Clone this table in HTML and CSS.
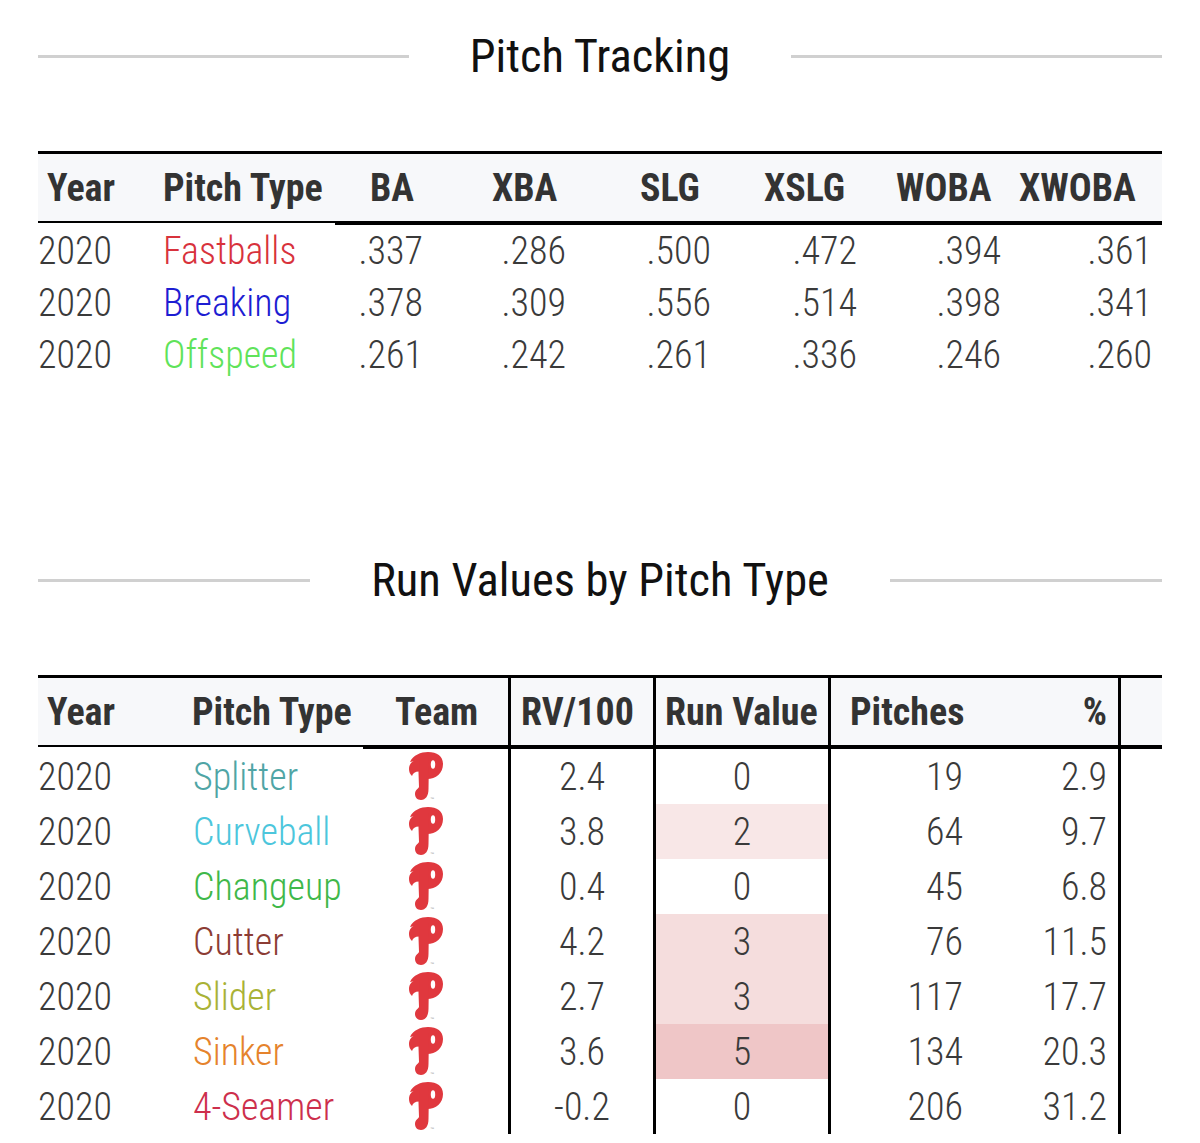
FILE: index.html
```html
<!DOCTYPE html>
<html lang="en">
<head>
<meta charset="utf-8">
<title>Pitch Tracking</title>
<link rel="stylesheet" href="styles.css">
</head>
<body>
<svg width="0" height="0" class="defs" aria-hidden="true">
  <defs>
    <g id="phi">
      <g fill="#e0383e">
        <path d="M2 10 C5 3 13 0 20 0 C29 0 35 4 35 12 C35 21 28 27 19 27 L12 27 L12 8 Z"/>
        <path d="M10 6 L21 6 L20.5 37 C20.5 44 17.5 48 13 48 C9 48 7 45 7 42 C7 38 10 37 11 35 Z"/>
        <path d="M12 7 C4 8 1 12 1 17 C1 20 2 22 4 24 C5 21 7 19.5 11 19.5 Z"/>
      </g>
      <ellipse cx="25" cy="12.5" rx="2.2" ry="4.2" fill="#fff"/>
      <text x="22" y="48" font-size="4" fill="#999" font-family="Liberation Sans, sans-serif">™</text>
    </g>
  </defs>
</svg>
<div class="page">
  <div class="section-title">
    <span class="rule"></span>
    <h2>Pitch Tracking</h2>
    <span class="rule"></span>
  </div>

  <div class="tbl t1">
    <div class="row hdr">
      <div class="cell lead">Year</div>
      <div class="cell lead">Pitch Type</div>
      <div class="cell">BA</div>
      <div class="cell">XBA</div>
      <div class="cell">SLG</div>
      <div class="cell">XSLG</div>
      <div class="cell">WOBA</div>
      <div class="cell">XWOBA</div>
    </div>
    <div class="row data">
      <div class="cell">2020</div>
      <div class="cell pt fastballs">Fastballs</div>
      <div class="cell">.337</div>
      <div class="cell">.286</div>
      <div class="cell">.500</div>
      <div class="cell">.472</div>
      <div class="cell">.394</div>
      <div class="cell">.361</div>
    </div>
    <div class="row data">
      <div class="cell">2020</div>
      <div class="cell pt breaking">Breaking</div>
      <div class="cell">.378</div>
      <div class="cell">.309</div>
      <div class="cell">.556</div>
      <div class="cell">.514</div>
      <div class="cell">.398</div>
      <div class="cell">.341</div>
    </div>
    <div class="row data">
      <div class="cell">2020</div>
      <div class="cell pt offspeed">Offspeed</div>
      <div class="cell">.261</div>
      <div class="cell">.242</div>
      <div class="cell">.261</div>
      <div class="cell">.336</div>
      <div class="cell">.246</div>
      <div class="cell">.260</div>
    </div>
  </div>

  <div class="section-title s2">
    <span class="rule"></span>
    <h2>Run Values by Pitch Type</h2>
    <span class="rule"></span>
  </div>

  <div class="tbl t2">
    <div class="row hdr">
      <div class="cell lead">Year</div>
      <div class="cell lead">Pitch Type</div>
      <div class="cell">Team</div>
      <div class="cell vl">RV/100</div>
      <div class="cell vl">Run Value</div>
      <div class="cell vl">Pitches</div>
      <div class="cell">%</div>
      <div class="cell vl"></div>
    </div>
    <div class="row data">
      <div class="cell">2020</div>
      <div class="cell pt splitter">Splitter</div>
      <div class="cell team"><svg class="logo" viewBox="0 0 36 49"><use href="#phi"/></svg></div>
      <div class="cell vl">2.4</div>
      <div class="cell vl">0</div>
      <div class="cell vl">19</div>
      <div class="cell">2.9</div>
      <div class="cell vl"></div>
    </div>
    <div class="row data">
      <div class="cell">2020</div>
      <div class="cell pt curveball">Curveball</div>
      <div class="cell team"><svg class="logo" viewBox="0 0 36 49"><use href="#phi"/></svg></div>
      <div class="cell vl">3.8</div>
      <div class="cell vl heat2">2</div>
      <div class="cell vl">64</div>
      <div class="cell">9.7</div>
      <div class="cell vl"></div>
    </div>
    <div class="row data">
      <div class="cell">2020</div>
      <div class="cell pt changeup">Changeup</div>
      <div class="cell team"><svg class="logo" viewBox="0 0 36 49"><use href="#phi"/></svg></div>
      <div class="cell vl">0.4</div>
      <div class="cell vl">0</div>
      <div class="cell vl">45</div>
      <div class="cell">6.8</div>
      <div class="cell vl"></div>
    </div>
    <div class="row data">
      <div class="cell">2020</div>
      <div class="cell pt cutter">Cutter</div>
      <div class="cell team"><svg class="logo" viewBox="0 0 36 49"><use href="#phi"/></svg></div>
      <div class="cell vl">4.2</div>
      <div class="cell vl heat3">3</div>
      <div class="cell vl">76</div>
      <div class="cell">11.5</div>
      <div class="cell vl"></div>
    </div>
    <div class="row data">
      <div class="cell">2020</div>
      <div class="cell pt slider">Slider</div>
      <div class="cell team"><svg class="logo" viewBox="0 0 36 49"><use href="#phi"/></svg></div>
      <div class="cell vl">2.7</div>
      <div class="cell vl heat3">3</div>
      <div class="cell vl">117</div>
      <div class="cell">17.7</div>
      <div class="cell vl"></div>
    </div>
    <div class="row data">
      <div class="cell">2020</div>
      <div class="cell pt sinker">Sinker</div>
      <div class="cell team"><svg class="logo" viewBox="0 0 36 49"><use href="#phi"/></svg></div>
      <div class="cell vl">3.6</div>
      <div class="cell vl heat5">5</div>
      <div class="cell vl">134</div>
      <div class="cell">20.3</div>
      <div class="cell vl"></div>
    </div>
    <div class="row data">
      <div class="cell">2020</div>
      <div class="cell pt seamer">4-Seamer</div>
      <div class="cell team"><svg class="logo" viewBox="0 0 36 49"><use href="#phi"/></svg></div>
      <div class="cell vl">-0.2</div>
      <div class="cell vl">0</div>
      <div class="cell vl">206</div>
      <div class="cell">31.2</div>
      <div class="cell vl"></div>
    </div>
  </div>
</div>
</body>
</html>
```

FILE: styles.css
```css
html, body {
  margin: 0;
  padding: 0;
  background: #fff;
}

body {
  font-family: "Roboto Condensed", "Roboto", "Liberation Sans Narrow", "DejaVu Sans Condensed", sans-serif;
  font-stretch: condensed;
}

.defs {
  position: absolute;
  width: 0;
  height: 0;
}

.page {
  padding: 0 38px;
}

.section-title {
  display: flex;
  align-items: center;
  gap: 61px;
  height: 112px;
}

.rule {
  flex: 1;
  height: 3px;
  background: #d0d0d0;
}

.section-title h2 {
  margin: 0;
  font-weight: 400;
  font-size: 46.5px;
  line-height: 1;
  color: #111;
}

.s2 {
  margin-top: 143px;
}

.tbl {
  margin-top: 39px;
}

.row {
  display: grid;
}

.cell {
  display: flex;
  align-items: center;
  white-space: nowrap;
  box-sizing: border-box;
}

/* header */
.hdr .cell {
  height: 74px;
  background: #f7f8fa;
  border-top: 3px solid #000;
  border-bottom: 4px solid #000;
  font-weight: 700;
  font-size: 38px;
  color: #333;
}

.hdr .cell.lead {
  border-bottom-width: 2px;
  margin-bottom: 2px;
  height: 72px;
}

/* data */
.data .cell {
  font-weight: 300;
  font-size: 38px;
  color: #3a3a3a;
}

.t1 .data .cell {
  height: 52px;
}

.t2 .data .cell {
  height: 55px;
}

/* table 1 */
.t1 .row {
  grid-template-columns: 112px 185px 98px 143px 145px 146px 144px 151px;
}

.t1 .data .cell {
  justify-content: flex-end;
  padding-right: 10px;
}

.t1 .data .cell:nth-child(1),
.t1 .data .cell:nth-child(2) {
  justify-content: flex-start;
  padding-right: 0;
}

.t1 .data .cell:nth-child(2) {
  padding-left: 13px;
}

.t1 .hdr .cell:nth-child(1) { padding-left: 9px; }
.t1 .hdr .cell:nth-child(2) { padding-left: 13px; }
.t1 .hdr .cell:nth-child(3) { padding-left: 35px; }
.t1 .hdr .cell:nth-child(4) { padding-left: 59px; }
.t1 .hdr .cell:nth-child(5) { padding-left: 64px; }
.t1 .hdr .cell:nth-child(6) { padding-left: 43px; }
.t1 .hdr .cell:nth-child(7) { padding-left: 29px; }
.t1 .hdr .cell:nth-child(8) { padding-left: 8px; }

/* table 2 */
.t2 .row {
  grid-template-columns: 142px 183px 145px 145px 175px 147px 143px 44px;
}

.t2 .vl {
  border-left: 3px solid #000;
}

.t2 .hdr .cell:nth-child(1) { padding-left: 9px; }
.t2 .hdr .cell:nth-child(2) { padding-left: 12px; }
.t2 .hdr .cell:nth-child(3) { padding-left: 32px; }
.t2 .hdr .cell:nth-child(4) { padding-left: 10px; }
.t2 .hdr .cell:nth-child(5) { padding-left: 9px; }
.t2 .hdr .cell:nth-child(6) { padding-left: 19px; }
.t2 .hdr .cell:nth-child(7) { justify-content: flex-end; padding-right: 11px; }

.t2 .data .cell:nth-child(2) { padding-left: 13px; }
.t2 .data .cell:nth-child(3) { padding-left: 45px; }
.t2 .data .cell:nth-child(4),
.t2 .data .cell:nth-child(5) { justify-content: center; }
.t2 .data .cell:nth-child(6) { justify-content: flex-end; padding-right: 12px; }
.t2 .data .cell:nth-child(7) { justify-content: flex-end; padding-right: 11px; }

.logo {
  width: 36px;
  height: 49px;
  display: block;
}

.data .heat2 { background: #f8e7e7; }
.data .heat3 { background: #f5dddd; }
.data .heat5 { background: #efc6c7; }

/* pitch type colours */
.data .fastballs { color: #d8323c; }
.data .breaking { color: #1d1dd2; }
.data .offspeed { color: #5fe35a; }
.data .splitter { color: #4fa5a5; }
.data .curveball { color: #4cc6dc; }
.data .changeup { color: #3fb84a; }
.data .cutter { color: #8c3c34; }
.data .slider { color: #a9b236; }
.data .sinker { color: #e5832c; }
.data .seamer { color: #cd2f4c; }
```
